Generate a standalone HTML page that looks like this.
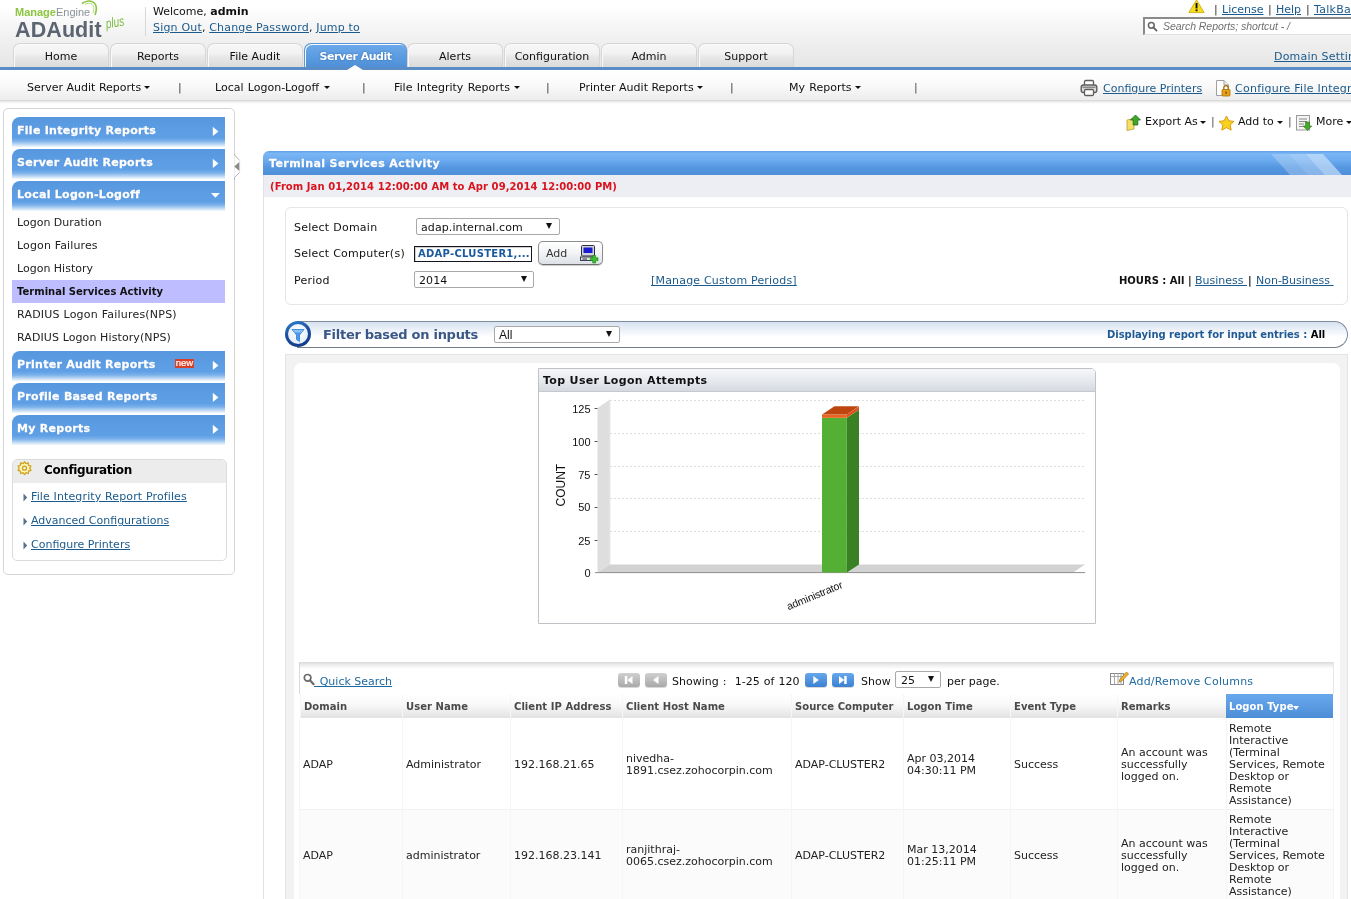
<!DOCTYPE html>
<html lang="en">
<head>
<meta charset="utf-8">
<title>ADAudit Plus - Terminal Services Activity</title>
<style>
*{box-sizing:border-box}
html,body{margin:0;padding:0}
body{width:1351px;height:899px;overflow:hidden;position:relative;background:#fff;
 font-family:"DejaVu Sans","Liberation Sans",sans-serif;font-size:11px;line-height:13px;color:#111;will-change:transform}
.a{position:absolute;white-space:nowrap}
a{color:#1b5a8c;text-decoration:underline;text-decoration-thickness:1px}
b,.b{font-weight:bold}
/* header */
#hdr{left:0;top:0;width:1351px;height:67px;background:linear-gradient(#ffffff 0%,#ffffff 10%,#f5f5f5 42%,#ececec 75%,#e6e6e6 100%)}
#blueline{left:0;top:67px;width:1351px;height:3px;background:#5a8dc6}
#submenu{left:0;top:70px;width:1351px;height:30px;background:linear-gradient(#ffffff 0%,#fafafa 50%,#ececec 100%)}
#subshadow{left:0;top:100px;width:1351px;height:4px;background:linear-gradient(#d4d4d4,#f4f4f4 60%,#ffffff)}
.tab{top:43px;height:24px;width:96px;border:1px solid #d6d6d6;border-bottom:none;border-radius:7px 7px 0 0;box-shadow:inset 1px 1px 0 #fafafa;
 background:linear-gradient(#f7f7f7 0%,#f2f2f2 40%,#e6e6e6 60%,#dbdbdb 100%);text-align:center;line-height:25px;color:#111}
.tab.on{letter-spacing:-0.500px;background:linear-gradient(#6eaaea 0%,#5a9ae0 60%,#4f8fd6 100%);border-color:#5a96d8;color:#fff;font-weight:bold;width:103px;text-shadow:0 0 2px #2f66a8}
.sm{top:81px;color:#111}
.sep{top:81px;color:#444}
.tri{width:0;height:0;border-left:3px solid transparent;border-right:3px solid transparent;border-top:3px solid #111}
</style>
</head>
<body>
<!-- HEADER -->
<div class="a" id="hdr"></div>
<div class="a" id="blueline"></div>
<div class="a" id="submenu"></div>
<div class="a" id="subshadow"></div>

<!-- logo -->
<div class="a" style="left:15px;top:6px;font-family:'Liberation Sans',sans-serif;font-size:11px;line-height:13px;letter-spacing:0px"><span style="color:#8cc63f;font-weight:bold">Manage</span><span style="color:#8a9299">Engine</span></div>
<svg class="a" style="left:80px;top:0" width="20" height="18" viewBox="0 0 20 18"><path d="M2 3.500 C9 -1.500 20 1 15 15" fill="none" stroke="#8cc63f" stroke-width="1.600"/><path d="M5 4.500 C10 1.500 16 4 13 13" fill="none" stroke="#b5d98a" stroke-width="1"/></svg>
<div class="a" style="left:15px;top:17px;font-family:'Liberation Sans',sans-serif;font-size:21.500px;line-height:26px;font-weight:bold;color:#5b6470;letter-spacing:0.100px">ADAudit</div>
<div class="a" style="left:102px;top:14px;font-family:'Liberation Sans',sans-serif;font-style:italic;font-size:14px;line-height:16px;color:#7dbb42;transform:rotate(-9deg) scaleX(0.720)">plus</div>
<div class="a" style="left:145px;top:7px;width:1px;height:29px;background:#d8d8d8"></div>

<div class="a" style="left:153px;top:5px">Welcome, <b>admin</b></div>
<div class="a" style="left:153px;top:21px;letter-spacing:0.180px"><a>Sign Out</a>, <a>Change Password</a>, <a>Jump to</a></div>

<!-- tabs -->
<div class="a tab" style="left:13px">Home</div>
<div class="a tab" style="left:110px">Reports</div>
<div class="a tab" style="left:207px">File Audit</div>
<div class="a tab on" style="left:304px">Server Audit</div>
<div class="a tab" style="left:407px">Alerts</div>
<div class="a tab" style="left:504px">Configuration</div>
<div class="a tab" style="left:601px">Admin</div>
<div class="a tab" style="left:698px">Support</div>
<div class="a" style="left:347px;top:65px;width:0;height:0;border-left:8px solid transparent;border-right:8px solid transparent;border-bottom:5px solid #fff"></div>

<!-- submenu -->
<div class="a sm" style="left:27px">Server Audit Reports</div><div class="a tri" style="left:144px;top:86px"></div>
<div class="a sep" style="left:178px">|</div>
<div class="a sm" style="left:215px;word-spacing:0.800px">Local Logon-Logoff</div><div class="a tri" style="left:324px;top:86px"></div>
<div class="a sep" style="left:362px">|</div>
<div class="a sm" style="left:394px;word-spacing:0.800px">File Integrity Reports</div><div class="a tri" style="left:514px;top:86px"></div>
<div class="a sep" style="left:546px">|</div>
<div class="a sm" style="left:579px">Printer Audit Reports</div><div class="a tri" style="left:697px;top:86px"></div>
<div class="a sep" style="left:730px">|</div>
<div class="a sm" style="left:789px;word-spacing:0.800px">My Reports</div><div class="a tri" style="left:855px;top:86px"></div>
<div class="a sep" style="left:914px;color:#5a4a4a">|</div>



<!-- header right -->
<svg class="a" style="left:1188px;top:-1px" width="17" height="15" viewBox="0 0 17 15"><path d="M8.500 0.800 L16.200 13.600 L0.800 13.600z" fill="#f6dc1e" stroke="#c9a800" stroke-width="0.800" stroke-linejoin="round"/><rect x="7.600" y="4" width="1.900" height="5.400" fill="#111"/><rect x="7.600" y="10.400" width="1.900" height="1.800" fill="#111"/></svg>
<div class="a" style="left:1214px;top:3px;color:#333">|</div>
<div class="a" style="left:1222px;top:3px"><a>License</a></div>
<div class="a" style="left:1268px;top:3px;color:#333">|</div>
<div class="a" style="left:1276px;top:3px"><a>Help</a></div>
<div class="a" style="left:1306px;top:3px;color:#333">|</div>
<div class="a" style="left:1314px;top:3px;letter-spacing:0.300px"><a>TalkBack</a></div>
<div class="a" style="left:1143px;top:17px;width:215px;height:18px;background:#fff;border:2px solid #8a8a8a;border-right:none;border-bottom:1px solid #e0e0e0"></div>
<svg class="a" style="left:1147px;top:21px" width="11" height="11" viewBox="0 0 11 11"><circle cx="4.300" cy="4.300" r="2.900" fill="none" stroke="#666" stroke-width="1.500"/><path d="M6.500 6.500 L9.600 9.600" stroke="#666" stroke-width="1.800" stroke-linecap="round"/></svg>
<div class="a" style="left:1163px;top:20px;font-family:'Liberation Sans',sans-serif;font-style:italic;font-size:10.500px;color:#707070;letter-spacing:-0.050px">Search Reports; shortcut - /</div>
<div class="a" style="left:1274px;top:50px;letter-spacing:0.200px"><a>Domain Settings</a></div>
<!-- submenu right -->
<svg class="a" style="left:1080px;top:79px" width="18" height="18" viewBox="0 0 18 18"><rect x="4.500" y="1.500" width="9" height="5.500" rx="1.200" fill="#fff" stroke="#5e5e5e" stroke-width="1.300"/><rect x="1.200" y="6" width="15.600" height="7.500" rx="2.200" fill="#dcdcdc" stroke="#5e5e5e" stroke-width="1.400"/><path d="M2.500 8.300 H15.500" stroke="#8a8a8a" stroke-width="1.600"/><rect x="4.500" y="10.500" width="9" height="6" rx="1.200" fill="#fff" stroke="#5e5e5e" stroke-width="1.300"/></svg>
<div class="a" style="left:1103px;top:82px"><a>Configure Printers</a></div>
<svg class="a" style="left:1215px;top:79px" width="17" height="18" viewBox="0 0 17 18"><path d="M1.500 1.500 H9 L13.500 6 V16.500 H1.500z" fill="#fff" stroke="#a0a0a0" stroke-width="1"/><path d="M9 1.500 V6 H13.500" fill="#eee" stroke="#a0a0a0" stroke-width="1"/><rect x="7" y="10.500" width="8" height="6.500" rx="1" fill="#e8a21a" stroke="#a86c00" stroke-width="0.800"/><path d="M8.800 10.500 V8.800 a2.200 2.200 0 0 1 4.400 0 V10.500" fill="none" stroke="#a86c00" stroke-width="1.300"/><rect x="10.400" y="12.600" width="1.300" height="2.200" fill="#6b4300"/></svg>
<div class="a" style="left:1235px;top:82px;letter-spacing:0.250px"><a>Configure File Integrity</a></div>

<style>
#sbox{left:3px;top:108px;width:232px;height:467px;border:1px solid #d6d6d6;border-radius:5px;background:#fff}
.acc{left:12px;width:213px;height:30px;border-radius:8px 0 0 0;background:linear-gradient(#5797de 0%,#5c9de3 45%,#5e9fe5 68%,#7ab1eb 80%,#c4dcf5 92%,#f4f9fe 100%);color:#fff;font-weight:bold;font-size:11px;line-height:15px;padding:6px 0 0 5px;letter-spacing:0.280px;text-shadow:0 0 1px #3d78c0;-webkit-text-stroke:0.300px #fff}
.arr{width:0;height:0;border-top:5px solid transparent;border-bottom:5px solid transparent;border-left:6px solid #fff;left:212.500px}
.arrd{width:0;height:0;border-left:5px solid transparent;border-right:5px solid transparent;border-top:5px solid #fff;left:210.500px}
.si{left:17px;color:#222}
#cfg{left:12px;top:459px;width:215px;height:102px;border:1px solid #dcdcdc;border-radius:5px;background:#fff;overflow:hidden}
#cfgh{left:0;top:0;width:215px;height:23px;background:#ececec}
.cl{left:31px}
.ctri{left:23.500px;width:0;height:0;border-top:3.500px solid transparent;border-bottom:3.500px solid transparent;border-left:3.500px solid #4a6a86}
</style>
<div class="a" id="sbox"></div>
<div class="a acc" style="top:117px">File Integrity Reports</div><svg class="a" style="left:212px;top:126px" width="8" height="11" viewBox="0 0 8 11"><path d="M0.800 0.700 L6.400 5.400 L0.800 10.100z" fill="#fff"/></svg>
<div class="a acc" style="top:149px">Server Audit Reports</div><svg class="a" style="left:212px;top:158px" width="8" height="11" viewBox="0 0 8 11"><path d="M0.800 0.700 L6.400 5.400 L0.800 10.100z" fill="#fff"/></svg>
<div class="a acc" style="top:181px">Local Logon-Logoff</div><svg class="a" style="left:210px;top:192px" width="11" height="7" viewBox="0 0 11 7"><path d="M1 1 H9.800 L5.400 5.800z" fill="#fff"/></svg>
<div class="a si" style="top:216px">Logon Duration</div>
<div class="a si" style="top:239px;letter-spacing:0.140px">Logon Failures</div>
<div class="a si" style="top:262px">Logon History</div>
<div class="a" style="left:12px;top:280px;width:213px;height:23px;background:#bdbdff"></div>
<div class="a si b" style="top:285px;font-size:10px;color:#111">Terminal Services Activity</div>
<div class="a si" style="top:308px;letter-spacing:0.220px">RADIUS Logon Failures(NPS)</div>
<div class="a si" style="top:331px;letter-spacing:0.100px">RADIUS Logon History(NPS)</div>
<div class="a acc" style="top:351px">Printer Audit Reports</div><svg class="a" style="left:212px;top:360px" width="8" height="11" viewBox="0 0 8 11"><path d="M0.800 0.700 L6.400 5.400 L0.800 10.100z" fill="#fff"/></svg>
<div class="a" style="left:175px;top:359px;width:19px;height:9px;background:#d9402a;color:#fff;font-size:9.500px;line-height:7.500px;text-align:center;font-family:'Liberation Sans',sans-serif;-webkit-text-stroke:0.200px #fff">new</div>
<div class="a acc" style="top:383px">Profile Based Reports</div><svg class="a" style="left:212px;top:392px" width="8" height="11" viewBox="0 0 8 11"><path d="M0.800 0.700 L6.400 5.400 L0.800 10.100z" fill="#fff"/></svg>
<div class="a acc" style="top:415px">My Reports</div><svg class="a" style="left:212px;top:424px" width="8" height="11" viewBox="0 0 8 11"><path d="M0.800 0.700 L6.400 5.400 L0.800 10.100z" fill="#fff"/></svg>
<div class="a" id="cfg"><div class="a" id="cfgh"></div></div>
<svg class="a" style="left:17px;top:461px" width="15" height="15" viewBox="0 0 15 15"><g fill="#fff4b8" stroke="#cfa21c" stroke-width="1.300" stroke-linejoin="round"><path d="M7.500 0.800 l1.500 1.900 2.300-.8 .3 2.400 2.300.7 -1.100 2.200 1.100 2.200 -2.300.7 -.3 2.400 -2.300-.8 -1.500 1.900 -1.500-1.900 -2.300.8 -.3-2.400 -2.300-.7 1.100-2.200 -1.100-2.200 2.300-.7 .3-2.400 2.300.8z"/><circle cx="7.500" cy="7.200" r="2" fill="#ececec"/></g></svg>
<div class="a b" style="left:44px;top:463px;font-size:12px;line-height:15px;color:#000;letter-spacing:-0.370px">Configuration</div>
<svg class="a" style="left:23px;top:493px" width="5" height="9" viewBox="0 0 5 9"><path d="M0.500 0.500 L4.200 4.500 L0.500 8.500z" fill="#54748f"/></svg><div class="a cl" style="top:490px;letter-spacing:0.130px"><a>File Integrity Report Profiles</a></div>
<svg class="a" style="left:23px;top:517px" width="5" height="9" viewBox="0 0 5 9"><path d="M0.500 0.500 L4.200 4.500 L0.500 8.500z" fill="#54748f"/></svg><div class="a cl" style="top:514px"><a>Advanced Configurations</a></div>
<svg class="a" style="left:23px;top:541px" width="5" height="9" viewBox="0 0 5 9"><path d="M0.500 0.500 L4.200 4.500 L0.500 8.500z" fill="#54748f"/></svg><div class="a cl" style="top:538px"><a>Configure Printers</a></div>
<!-- collapse handle -->
<svg class="a" style="left:233px;top:154px" width="9" height="26" viewBox="0 0 9 26"><path d="M1.500 0 V1 L6.800 6.600 V18.300 L1.500 23.500 V26" fill="#fff" stroke="none"/><path d="M1.500 0 V1 L6.800 6.600 M6.800 18.300 L1.500 23.500 V26" fill="none" stroke="#b4b4b4" stroke-width="1"/><path d="M6.800 6.600 V18.300" stroke="#f0f0f0" stroke-width="1"/><path d="M6.300 8 L1.300 12.400 L6.300 16.900z" fill="#8a8a8a"/></svg>

<!--SIDEBAR_END-->

<style>
.lnk{color:#1f5f99}
.sel{height:17px;border:1px solid #a9a9a9;border-radius:2px;background:#fff;font-size:11px;line-height:15px;padding:1px 0 0 4px;color:#111;letter-spacing:0.100px}
.dar{width:0;height:0;border-left:3.5px solid transparent;border-right:3.5px solid transparent;border-top:6px solid #111}
.th{top:694px;height:24px;background:linear-gradient(#ffffff 0%,#fafafa 40%,#e2e2e2 100%);border-left:1px solid #f6f6f6;font-weight:bold;font-size:10px;line-height:13px;color:#4a4a4a;padding:6px 0 0 3px;letter-spacing:0.050px}
.td{color:#222;line-height:12px}
.vl{top:718px;width:1px;height:181px;background:#f4f5f8}
.pg{top:673px;width:21.500px;height:14px;border-radius:3px;box-shadow:0 1px 0 rgba(0,0,0,0.150)}
</style>
<!-- main left border -->
<div class="a" style="left:263px;top:174px;width:1px;height:725px;background:#e1e2e4"></div>
<!-- toolbar -->
<svg class="a" style="left:1126px;top:114px" width="16" height="17" viewBox="0 0 16 17"><path d="M1 6 L8 4.500 L8 15 L1 16.500z" fill="#f3df6a" stroke="#b9a030" stroke-width="0.800"/><path d="M9.500 1 L14.500 6 L11.800 6 L11.800 11 L7.200 11 L7.200 6 L4.500 6z" fill="#3ea62b" stroke="#1f6d14" stroke-width="0.800"/></svg>
<div class="a" style="left:1145px;top:115px">Export As</div><div class="a tri" style="left:1200px;top:121px"></div>
<div class="a" style="left:1211px;top:115px;color:#555">|</div>
<svg class="a" style="left:1218px;top:115px" width="17" height="16" viewBox="0 0 17 16"><path d="M8.500 1 L10.800 5.800 L16 6.400 L12.200 10 L13.200 15.200 L8.500 12.600 L3.800 15.200 L4.800 10 L1 6.400 L6.200 5.800z" fill="#f7d21f" stroke="#d89a10" stroke-width="1" stroke-linejoin="round"/></svg>
<div class="a" style="left:1238px;top:115px">Add to</div><div class="a tri" style="left:1277px;top:121px"></div>
<div class="a" style="left:1288px;top:115px;color:#555">|</div>
<svg class="a" style="left:1296px;top:115px" width="17" height="16" viewBox="0 0 17 16"><rect x="0.500" y="0.500" width="13" height="14.500" fill="#f4f4f4" stroke="#9a9a9a"/><path d="M3 4 H11 M3 6.500 H11 M3 9 H8 M3 11.500 H8" stroke="#8a8a8a" stroke-width="1"/><path d="M9.500 7 H13.500 V11 H15.800 L11.500 15.500 L7.200 11 H9.500z" fill="#4aa82e" stroke="#2a7a16" stroke-width="0.600"/></svg>
<div class="a" style="left:1316px;top:115px">More</div><div class="a tri" style="left:1346px;top:121px"></div>

<!-- title bar -->
<div class="a" style="left:263px;top:151px;width:1088px;height:24px;border-radius:6px 0 0 0;background:linear-gradient(#5f9fe6 0%,#7ab6f4 10%,#6aaaee 40%,#5798e2 65%,#4f8fd9 100%);overflow:hidden">
 <svg class="a" style="left:1000px;top:0" width="88" height="24" viewBox="0 0 88 24"><g fill="#d6e8fc"><path d="M8 3 H25.500 L44.500 24 H27z" opacity="0.330"/><path d="M25.500 3 H42.500 L61.500 24 H44.500z" opacity="0.420"/><path d="M42.500 3 H60 L79 24 H61.500z" opacity="0.620"/></g></svg>
</div>
<div class="a b" style="left:269px;top:156px;font-size:11px;line-height:15px;color:#fff;letter-spacing:0.400px;text-shadow:0 0 1px #2f6cb8;-webkit-text-stroke:0.300px #fff">Terminal Services Activity</div>
<div class="a" style="left:264px;top:175px;width:1087px;height:22px;background:#eceef3"></div>
<div class="a b" style="left:270px;top:180px;font-size:10px;color:#d9141e;letter-spacing:0.060px">(From Jan 01,2014 12:00:00 AM to Apr 09,2014 12:00:00 PM)</div>

<!-- form panel -->
<div class="a" style="left:285px;top:207px;width:1063px;height:98px;border:1px solid #e6e6e6;border-radius:6px;background:#fff"></div>
<div class="a" style="left:294px;top:221px;letter-spacing:0.250px">Select Domain</div>
<div class="a sel" style="left:416px;top:218px;width:144px">adap.internal.com</div><div class="a dar" style="left:546px;top:223px"></div>
<div class="a" style="left:294px;top:247px;letter-spacing:0.250px">Select Computer(s)</div>
<div class="a" style="left:414px;top:246px;width:118px;height:16px;border:1px solid #15151f;box-shadow:inset 1px 1px 0 #d0d0d0;background:#fff"></div>
<div class="a b" style="left:418px;top:247px;font-size:10px;color:#1b5a9c;letter-spacing:0.270px">ADAP-CLUSTER1,...</div>
<div class="a" style="left:538px;top:241px;width:65px;height:24px;border:1px solid #8e8e8e;border-bottom-color:#6e6e6e;border-radius:5px;background:linear-gradient(#ffffff,#f2f4f6 50%,#dde1e6);box-shadow:0 1px 1px #ccc"></div>
<div class="a" style="left:546px;top:247px;color:#333">Add</div>
<svg class="a" style="left:579px;top:244px" width="21" height="20" viewBox="0 0 21 20"><rect x="2.500" y="1.500" width="13" height="10.500" rx="1" fill="#cfd3da" stroke="#2c2f3a" stroke-width="1"/><rect x="4.500" y="3.500" width="9" height="5.500" fill="#1a1ad0"/><rect x="1.500" y="13" width="12.500" height="3.500" fill="#dfe2e8" stroke="#2c2f3a" stroke-width="0.900"/><path d="M3.500 15 H8" stroke="#2c2f3a" stroke-width="1"/><path d="M13.800 11.500 H16.600 V13.800 H19 V16.600 H16.600 V19 H13.800 V16.600 H11.400 V13.800 H13.800z" fill="#3cc030" stroke="#1f8a18" stroke-width="0.700"/></svg>
<div class="a" style="left:294px;top:274px;letter-spacing:0.250px">Period</div>
<div class="a sel" style="left:414px;top:271px;width:120px">2014</div><div class="a dar" style="left:521px;top:276px"></div>
<div class="a" style="left:651px;top:274px;letter-spacing:0.190px"><a>[Manage Custom Periods]</a></div>
<div class="a b" style="left:1119px;top:274px;font-size:10px;color:#111;letter-spacing:0px">HOURS : All |</div>
<div class="a" style="left:1195px;top:274px;font-size:11px"><a>Business&nbsp;</a></div>
<div class="a b" style="left:1248px;top:274px;font-size:10px">|</div>
<div class="a" style="left:1256px;top:274px;font-size:11px"><a>Non-Business&nbsp;</a></div>

<!-- filter bar -->
<div class="a" style="left:297px;top:321px;width:1051px;height:27px;border:1px solid #7d8ea3;border-bottom-color:#747c86;border-left:none;border-radius:0 14px 14px 0;background:linear-gradient(#d7e2ef 0%,#eef3f9 35%,#ffffff 60%,#ffffff 100%)"></div>
<div class="a" style="left:285px;top:321px;width:26px;height:26px;border-radius:13px;background:linear-gradient(160deg,#2f83d8 0%,#1b4c9c 45%,#123a88 100%)"></div><div class="a" style="left:288px;top:324px;width:20px;height:20px;border-radius:10px;background:radial-gradient(circle at 50% 40%,#ffffff 0%,#dbe8f8 100%)"></div>
<svg class="a" style="left:291px;top:328px" width="14" height="15" viewBox="0 0 14 15"><path d="M1 1.500 H13 L8.500 7 V13.500 L5.500 11.500 V7z" fill="#4f97e6" stroke="#3a86dc" stroke-width="0.900" stroke-linejoin="round"/><path d="M1.800 2 H12.200 L10.200 4.500 H3.800z" fill="#8cc0f4"/></svg>
<div class="a b" style="left:323px;top:327px;font-size:13px;line-height:16px;color:#3a5786;letter-spacing:-0.280px">Filter based on inputs</div>
<div class="a sel" style="left:494px;top:326px;width:126px;font-family:'Liberation Sans',sans-serif;font-size:12px;line-height:15px">All</div><div class="a dar" style="left:606px;top:331px"></div>
<div class="a b" style="left:1107px;top:328px;font-size:10px;color:#1f5a94;letter-spacing:-0.030px">Displaying report for input entries : <span style="color:#000">All</span></div>

<!-- chart outer panel -->
<div class="a" style="left:285px;top:354px;width:1063px;height:560px;border:1px solid #e4e4e4;background:#f2f2f2"></div>
<div class="a" style="left:294px;top:363px;width:1046px;height:550px;border-radius:7px 7px 0 0;background:#fff"></div>

<!-- chart box -->
<div class="a" style="left:538px;top:368px;width:558px;height:256px;border:1px solid #bfc3c8;border-radius:0 5px 0 0;background:#fff"></div>
<div class="a" style="left:539px;top:369px;width:556px;height:23px;background:linear-gradient(#f6f7f9 0%,#e6e9ed 55%,#d5dae0 100%);border-bottom:1px solid #c5c9ce;border-radius:0 4px 0 0"></div>
<div class="a b" style="left:543px;top:374px;font-size:11px;color:#111;letter-spacing:0.330px">Top User Logon Attempts</div>
<svg class="a" style="left:539px;top:392px" width="556" height="231" viewBox="539 392 556 231" font-family="'Liberation Sans',sans-serif">
 <!-- left wall -->
 <path d="M597.500 408 L610 399.500 L610 564.500 L597.500 572.600z" fill="#dedede"/>
 <!-- floor -->
 <path d="M597.500 572.600 L610 564.500 L1085 564.500 L1073 572.600z" fill="#d2d2d2"/>
 <path d="M610 399.500 V564.500 H1085" fill="none" stroke="#e9e9e9" stroke-width="1"/>
 <!-- gridlines -->
 <g stroke="#dcdcdc" stroke-width="1" stroke-dasharray="2 2">
  <path d="M610 400.500 H1086"/><path d="M610 433.500 H1086"/><path d="M610 466.500 H1086"/><path d="M610 498.500 H1086"/><path d="M610 531.500 H1086"/>
 </g>
 <!-- axis -->
 <path d="M595 572.600 H1085" stroke="#8e8e8e" stroke-width="1"/>
 <g stroke="#555" stroke-width="1"><path d="M594.500 408.500 H597.500"/><path d="M594.500 441.500 H597.500"/><path d="M594.500 474.500 H597.500"/><path d="M594.500 507.500 H597.500"/><path d="M594.500 540.500 H597.500"/></g>
 <g font-size="11" fill="#111" text-anchor="end">
  <text x="590.500" y="413">125</text><text x="590.500" y="446">100</text><text x="590.500" y="479">75</text><text x="590.500" y="511.400">50</text><text x="590.500" y="544.700">25</text><text x="590.500" y="577.300">0</text>
 </g>
 <text transform="translate(565.300 506.500) rotate(-90)" font-size="12" fill="#111">COUNT</text>
 <!-- bar -->
 <path d="M822 417.800 H846.800 V572.600 H822z" fill="#53b034"/>
 <path d="M846.800 417.800 L859 409.700 V564.500 L846.800 572.600z" fill="#3a8025"/>
 <path d="M822 414.600 H846.800 V417.800 H822z" fill="#ea6420"/>
 <path d="M846.800 414.600 L859 406.500 V409.700 L846.800 417.800z" fill="#d9531a"/>
 <path d="M822 414.600 L834.500 406.300 H859 L846.800 414.600z" fill="#bf450f"/>
 <text transform="translate(788.500 610.300) rotate(-22.500)" font-size="10.600" fill="#111" letter-spacing="-0.150">administrator</text>
</svg>


<!-- table toolbar -->
<div class="a" style="left:299px;top:662px;width:1035px;height:32px;border-left:1px solid #d9d9d9;border-right:1px solid #e6e6e6;background:linear-gradient(#d9d9d9 0px,#eeeeee 3px,#ffffff 7px,#ffffff 100%)"></div>
<svg class="a" style="left:303px;top:673px" width="12" height="13" viewBox="0 0 12 13"><circle cx="4.600" cy="4.800" r="3.300" fill="none" stroke="#6a6a6a" stroke-width="1.700"/><path d="M7.200 7.600 L10.600 11.200" stroke="#6a6a6a" stroke-width="2.200" stroke-linecap="round"/></svg>
<div class="a" style="left:314px;top:675px"><a style="color:#1f6aa0">&nbsp;&#8201;Quick Search</a></div>
<div class="a pg" style="left:618px;background:linear-gradient(#d0d0d0,#a9a9a9)"></div>
<svg class="a" style="left:618px;top:673px" width="21" height="14" viewBox="0 0 21 14"><rect x="6.800" y="3" width="2.500" height="8" fill="#fff"/><path d="M14.500 3 L9.300 7 L14.500 11z" fill="#fff"/></svg>
<div class="a pg" style="left:645px;background:linear-gradient(#d0d0d0,#a9a9a9)"></div>
<svg class="a" style="left:645px;top:673px" width="21" height="14" viewBox="0 0 21 14"><path d="M13.500 3 L8 7 L13.500 11z" fill="#fff"/></svg>
<div class="a" style="left:672px;top:675px;word-spacing:0.600px">Showing :&nbsp; 1-25 of 120</div>
<div class="a pg" style="left:805px;background:linear-gradient(#67a8ec,#3b80d2)"></div>
<svg class="a" style="left:805px;top:673px" width="21" height="14" viewBox="0 0 21 14"><path d="M8.300 3 L13.800 7 L8.300 11z" fill="#fff"/></svg>
<div class="a pg" style="left:832px;background:linear-gradient(#67a8ec,#3b80d2)"></div>
<svg class="a" style="left:832px;top:673px" width="21" height="14" viewBox="0 0 21 14"><path d="M7 3 L12.200 7 L7 11z" fill="#fff"/><rect x="12.200" y="3" width="2.500" height="8" fill="#fff"/></svg>
<div class="a" style="left:861px;top:675px">Show</div>
<div class="a sel" style="left:895px;top:671px;width:46px;padding-left:5px">25</div><div class="a dar" style="left:928px;top:676px"></div>
<div class="a" style="left:947px;top:675px">per page.</div>
<svg class="a" style="left:1110px;top:671px" width="20" height="15" viewBox="0 0 20 15"><rect x="0.500" y="2.500" width="13" height="11" fill="#fff" stroke="#8a8a8a"/><path d="M0.500 5.500 H13.500 M4.500 2.500 V13.500 M8 2.500 V13.500 M11 2.500 V13.500" stroke="#a8a8a8" stroke-width="1"/><path d="M9 11 L10 8 L16.500 1 L18.500 3 L12 9.800z" fill="#f0b429" stroke="#a8700a" stroke-width="0.700"/></svg>
<div class="a" style="left:1129px;top:675px;color:#1f6aa0;letter-spacing:0.180px">Add/Remove Columns</div>
<!-- table header -->
<div class="a th" style="left:300px;width:102px">Domain</div>
<div class="a th" style="left:402px;width:108px">User Name</div>
<div class="a th" style="left:510px;width:112px">Client IP Address</div>
<div class="a th" style="left:622px;width:169px">Client Host Name</div>
<div class="a th" style="left:791px;width:112px">Source Computer</div>
<div class="a th" style="left:903px;width:107px">Logon Time</div>
<div class="a th" style="left:1010px;width:107px">Event Type</div>
<div class="a th" style="left:1117px;width:109px">Remarks</div>
<div class="a th" style="left:1226px;width:107px;background:linear-gradient(#6aa8ec 0%,#5a9be2 50%,#4d8dd6 100%);color:#fff;border-left:none">Logon Type<span style="display:inline-block;width:0;height:0;border-left:3.500px solid transparent;border-right:3.500px solid transparent;border-top:4.500px solid #fff;vertical-align:0"></span></div>
<!-- rows -->
<div class="a" style="left:300px;top:718px;width:1033px;height:92px;background:#fff;border-bottom:1px solid #f1f2f6"></div>
<div class="a" style="left:300px;top:810px;width:1033px;height:90px;background:#fbfbfb"></div>
<div class="a vl" style="left:402px"></div><div class="a vl" style="left:510px"></div><div class="a vl" style="left:622px"></div><div class="a vl" style="left:791px"></div><div class="a vl" style="left:903px"></div><div class="a vl" style="left:1010px"></div><div class="a vl" style="left:1117px"></div><div class="a vl" style="left:1226px"></div><div class="a vl" style="left:1333px"></div><div class="a vl" style="left:299px"></div>

<div class="a td" style="left:303px;top:759px">ADAP</div>
<div class="a td" style="left:406px;top:759px">Administrator</div>
<div class="a td" style="left:514px;top:759px">192.168.21.65</div>
<div class="a td" style="left:626px;top:753px">nivedha-<br>1891.csez.zohocorpin.com</div>
<div class="a td" style="left:795px;top:759px">ADAP-CLUSTER2</div>
<div class="a td" style="left:907px;top:753px">Apr 03,2014<br>04:30:11 PM</div>
<div class="a td" style="left:1014px;top:759px">Success</div>
<div class="a td" style="left:1121px;top:747px">An account was<br>successfully<br>logged on.</div>
<div class="a td" style="left:1229px;top:723px">Remote<br>Interactive<br>(Terminal<br>Services, Remote<br>Desktop or<br>Remote<br>Assistance)</div>

<div class="a td" style="left:303px;top:850px">ADAP</div>
<div class="a td" style="left:406px;top:850px">administrator</div>
<div class="a td" style="left:514px;top:850px">192.168.23.141</div>
<div class="a td" style="left:626px;top:844px">ranjithraj-<br>0065.csez.zohocorpin.com</div>
<div class="a td" style="left:795px;top:850px">ADAP-CLUSTER2</div>
<div class="a td" style="left:907px;top:844px">Mar 13,2014<br>01:25:11 PM</div>
<div class="a td" style="left:1014px;top:850px">Success</div>
<div class="a td" style="left:1121px;top:838px">An account was<br>successfully<br>logged on.</div>
<div class="a td" style="left:1229px;top:814px">Remote<br>Interactive<br>(Terminal<br>Services, Remote<br>Desktop or<br>Remote<br>Assistance)</div>


</body>
</html>
